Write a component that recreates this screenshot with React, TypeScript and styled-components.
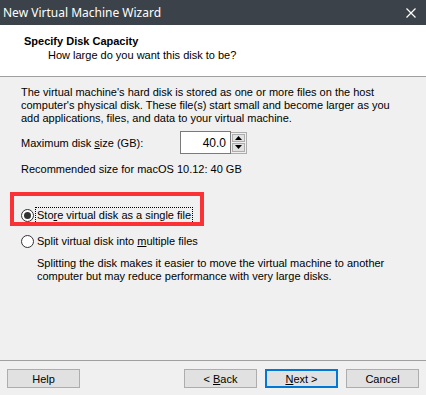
import * as React from "react";
import styled, { createGlobalStyle } from "styled-components";

const GlobalStyle = createGlobalStyle`
  html, body {
    margin: 0;
    padding: 0;
    background: #f0f0f0;
  }
`;

const Window = styled.div`
  width: 426px;
  height: 395px;
  display: flex;
  flex-direction: column;
  background: #f0f0f0;
  font-family: "Liberation Sans", Arial, sans-serif;
  font-size: 11px;
  color: #000;
  overflow: hidden;
`;

const TitleBar = styled.div`
  height: 25px;
  flex: none;
  background: #3b4249;
  color: #fff;
  display: flex;
  align-items: center;
  justify-content: space-between;
  padding: 0 10px 0 3px;
  font-family: "Noto Sans", "Open Sans", sans-serif;
  font-size: 12px;
`;

const Header = styled.div`
  height: 52px;
  flex: none;
  background: #fff;
  border-bottom: 1px solid #a0a0a0;
  padding: 10px 0 0 24px;
  box-sizing: border-box;
`;

const HeaderTitle = styled.div`
  font-weight: 700;
  line-height: 13px;
`;

const HeaderSub = styled.div`
  margin: 1px 0 0 24px;
  line-height: 13px;
`;

const Body = styled.div`
  flex: 1;
  padding: 9px 21px 0;
  display: flex;
  flex-direction: column;
`;

const Para = styled.p`
  margin: 0;
  line-height: 13px;
`;

const SizeRow = styled.div`
  display: flex;
  align-items: center;
  margin-top: 6px;
  height: 23px;
`;

const SizeLabel = styled.label`
  width: 159px;
  u {
    text-decoration: underline;
  }
`;

const NumberBox = styled.div`
  width: 51px;
  height: 23px;
  box-sizing: border-box;
  border: 1px solid #7a7a7a;
  background: #fff;
  display: flex;
  align-items: center;
  justify-content: flex-end;
  padding-right: 4px;
  font-size: 12px;
`;

const Spinner = styled.div`
  width: 16px;
  height: 22px;
  box-sizing: border-box;
  border: 1px solid #adadad;
  border-left: none;
  display: flex;
  flex-direction: column;
  padding: 1px;
  gap: 1px;
  background: #f0f0f0;
`;

const SpinButton = styled.div`
  flex: 1;
  background: #e1e1e1;
  border: 1px solid #adadad;
  display: flex;
  align-items: center;
  justify-content: center;
`;

const Recommended = styled.div`
  margin-top: 9px;
  line-height: 13px;
`;

const Options = styled.div`
  margin-top: 33px;
  display: flex;
  flex-direction: column;
  gap: 13px;
`;

const OptionRow = styled.div`
  position: relative;
  display: flex;
  align-items: center;
  height: 13px;
`;

const Radio = styled.span<{ $checked?: boolean }>`
  width: 13px;
  height: 13px;
  box-sizing: border-box;
  border-radius: 50%;
  border: 1px solid #333;
  background: #fff;
  flex: none;
  display: flex;
  align-items: center;
  justify-content: center;
  &::after {
    content: "";
    width: 7px;
    height: 7px;
    border-radius: 50%;
    background: ${(p) => (p.$checked ? "#333" : "transparent")};
  }
`;

const OptionText = styled.span<{ $focused?: boolean }>`
  margin-left: 2px;
  padding: 1px 1px;
  line-height: 13px;
  outline: ${(p) => (p.$focused ? "1px dotted #000" : "none")};
  outline-offset: 0;
  u {
    text-decoration: underline;
  }
`;

const Highlight = styled.div`
  position: absolute;
  left: -11px;
  top: -17px;
  width: 194px;
  height: 34px;
  box-sizing: border-box;
  border: 4px solid #fa3236;
  pointer-events: none;
`;

const OptionNote = styled(Para)`
  margin: -4px 0 0 16px;
`;

const Footer = styled.div`
  flex: none;
  height: 35px;
  border-top: 1px solid #a0a0a0;
  padding: 8px 7px 0;
  box-sizing: border-box;
  display: flex;
  gap: 8px;
`;

const Button = styled.button<{ $default?: boolean }>`
  width: 73px;
  height: 19px;
  box-sizing: border-box;
  background: #e1e1e1;
  border: ${(p) => (p.$default ? "2px solid #0078d7" : "1px solid #adadad")};
  font-family: "Liberation Sans", Arial, sans-serif;
  font-size: 11px;
  color: #000;
  padding: 0;
  u {
    text-decoration: underline;
  }
`;

const Spacer = styled.div`
  flex: 1;
`;

const CloseIcon = () => (
  <svg width="10" height="10" viewBox="0 0 10 10">
    <path d="M0.5 0.5L9.5 9.5M9.5 0.5L0.5 9.5" stroke="#fff" strokeWidth="1.2" />
  </svg>
);

const Arrow = ({ up }: { up?: boolean }) => (
  <svg width="7" height="4" viewBox="0 0 7 4">
    <path d={up ? "M3.5 0L7 4H0Z" : "M0 0H7L3.5 4Z"} fill="#000" />
  </svg>
);

export default function App() {
  return (
    <>
      <GlobalStyle />
      <Window>
        <TitleBar>
          <span>New Virtual Machine Wizard</span>
          <CloseIcon />
        </TitleBar>
        <Header>
          <HeaderTitle>Specify Disk Capacity</HeaderTitle>
          <HeaderSub>How large do you want this disk to be?</HeaderSub>
        </Header>
        <Body>
          <Para>
            The virtual machine's hard disk is stored as one or more files on the host
            <br />
            computer's physical disk. These file(s) start small and become larger as you
            <br />
            add applications, files, and data to your virtual machine.
          </Para>
          <SizeRow>
            <SizeLabel>
              Maximum disk <u>s</u>ize (GB):
            </SizeLabel>
            <NumberBox>40.0</NumberBox>
            <Spinner>
              <SpinButton>
                <Arrow up />
              </SpinButton>
              <SpinButton>
                <Arrow />
              </SpinButton>
            </Spinner>
          </SizeRow>
          <Recommended>Recommended size for macOS 10.12: 40 GB</Recommended>
          <Options>
            <OptionRow>
              <Highlight />
              <Radio $checked />
              <OptionText $focused>
                Sto<u>r</u>e virtual disk as a single file
              </OptionText>
            </OptionRow>
            <OptionRow>
              <Radio />
              <OptionText>
                Split virtual disk into <u>m</u>ultiple files
              </OptionText>
            </OptionRow>
            <OptionNote>
              Splitting the disk makes it easier to move the virtual machine to another
              <br />
              computer but may reduce performance with very large disks.
            </OptionNote>
          </Options>
        </Body>
        <Footer>
          <Button>Help</Button>
          <Spacer />
          <Button>
            &lt; <u>B</u>ack
          </Button>
          <Button $default>
            <u>N</u>ext &gt;
          </Button>
          <Button>Cancel</Button>
        </Footer>
      </Window>
    </>
  );
}
